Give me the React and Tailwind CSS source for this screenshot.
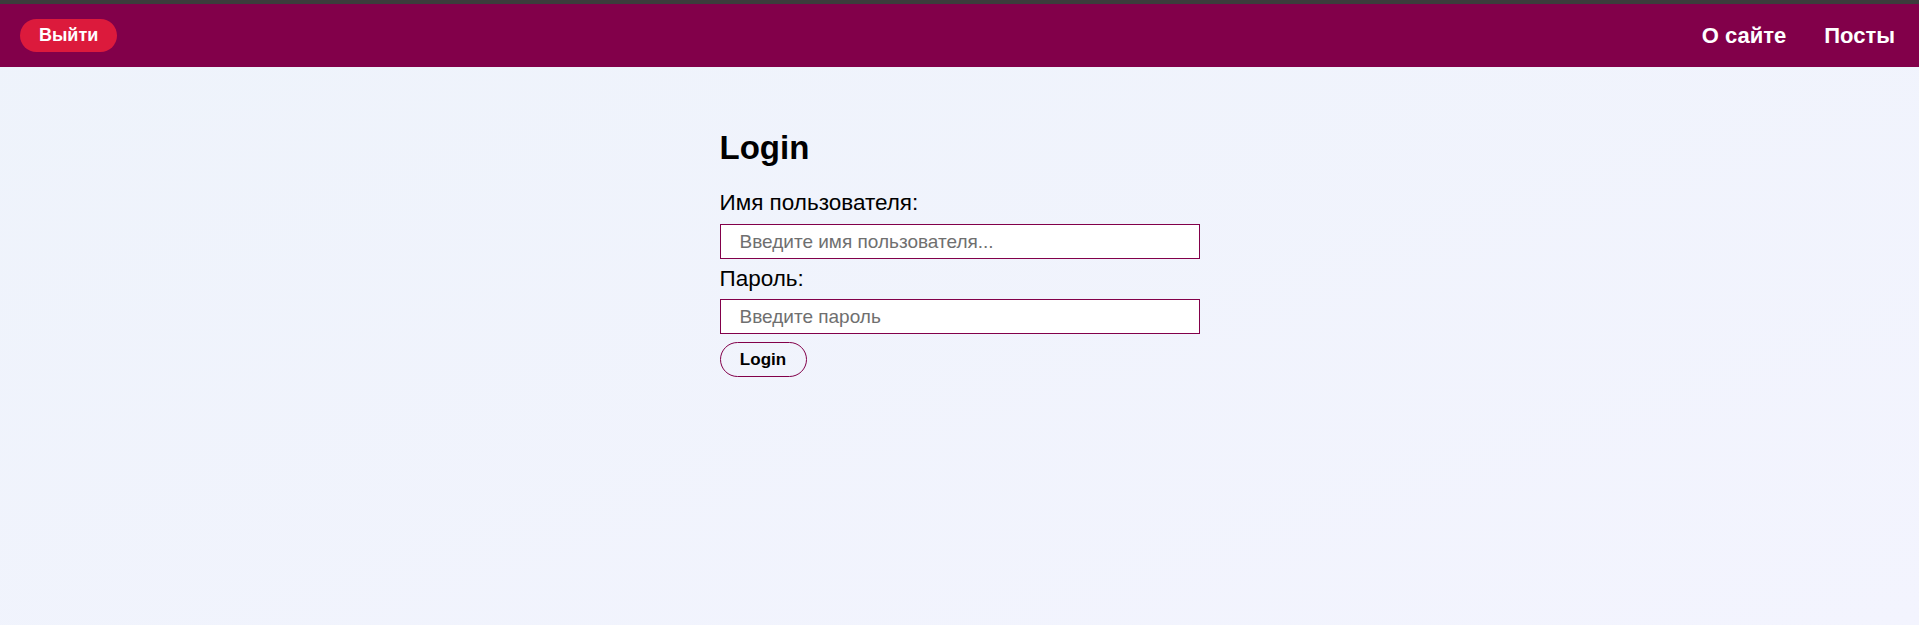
import React from 'react';

const App = () => {
    return (
        <div className="min-h-screen bg-gradient-to-br from-[#eef3fb] to-[#f3f4fe] font-['Liberation_Sans',Arial,sans-serif]">
            {/* Top strip */}
            <div className="h-[4px] bg-[#3c3c3c]"></div>

            {/* Header */}
            <header className="h-[63px] bg-[#82004a] flex items-center justify-between pl-[20px] pr-[24px]">
                <button className="h-[33px] px-[19px] rounded-full bg-[#dc1a3c] text-white text-[18px] font-bold">
                    Выйти
                </button>
                <nav className="flex items-center gap-[38px] text-white text-[22px] font-bold">
                    <a href="#">О сайте</a>
                    <a href="#">Посты</a>
                </nav>
            </header>

            {/* Login form */}
            <main className="flex justify-center pt-[62px]">
                <form className="w-[480px] flex flex-col" onSubmit={(e) => e.preventDefault()}>
                    <h1 className="text-[33px] leading-[38px] font-bold text-black mb-[23px]">Login</h1>

                    <label className="text-[22.5px] leading-[26px] text-black">Имя пользователя:</label>
                    <input
                        type="text"
                        placeholder="Введите имя пользователя..."
                        className="mt-[8px] h-[35px] border border-[#82004a] bg-white px-[19px] text-[19px] placeholder:text-[#6f6f6f] outline-none"
                    />

                    <label className="mt-[7px] text-[22.5px] leading-[26px] text-black">Пароль:</label>
                    <input
                        type="password"
                        placeholder="Введите пароль"
                        className="mt-[7px] h-[35px] border border-[#82004a] bg-white px-[19px] text-[19px] placeholder:text-[#6f6f6f] outline-none"
                    />

                    <div className="mt-[8px]">
                        <button type="submit" className="h-[35px] w-[87px] rounded-full border border-[#82004a] text-[17px] font-bold text-black">
                            Login
                        </button>
                    </div>
                </form>
            </main>
        </div>
    );
};

export default App;
